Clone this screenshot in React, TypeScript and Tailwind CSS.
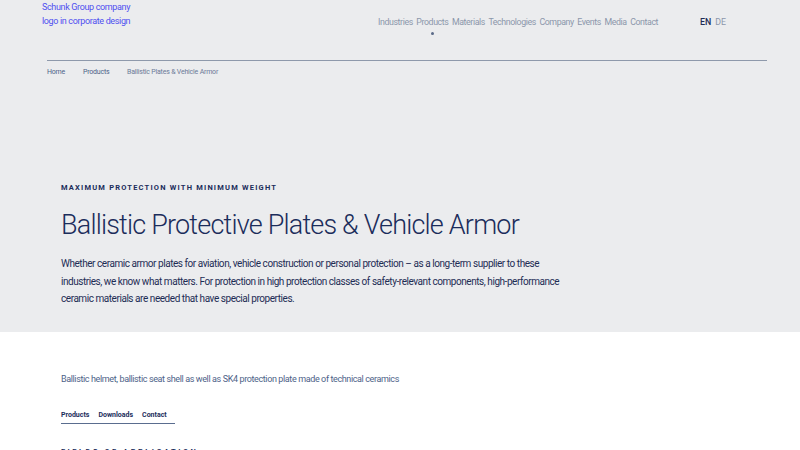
import React from "react";

export default function App() {
  const nav = ["Industries", "Products", "Materials", "Technologies", "Company", "Events", "Media", "Contact"];
  return (
    <div className="w-[800px] h-[450px] overflow-hidden bg-white font-['Roboto',sans-serif]">
      <section className="bg-[#ebecee] h-[332px] flex flex-col">
        <header className="flex items-start h-[60px]">
          <div className="ml-[42px] w-[336px] shrink-0 text-[9px] leading-[14px] text-[#4f4ff0] tracking-[-0.35px]">
            <div>Schunk Group company</div>
            <div>logo in corporate design</div>
          </div>
          <nav className="flex shrink-0 gap-[3.5px] pt-[15px] text-[8.8px] leading-[14px] text-[#8c97ab] tracking-[-0.4px]">
            {nav.map((n) => (
              <div key={n} className="flex flex-col items-center">
                <span>{n}</span>
                {n === "Products" && <span className="mt-[3px] w-[3px] h-[3px] rounded-full bg-[#5a6a88]" />}
              </div>
            ))}
          </nav>
          <div className="ml-auto mr-[74px] pt-[15px] flex gap-[4px] text-[8.8px] leading-[14px]">
            <span className="text-[#1e2d55] font-medium">EN</span>
            <span className="text-[#8c97ab]">DE</span>
          </div>
        </header>
        <div className="ml-[47px] mr-[33px] border-t border-[#8e99ab]" />
        <div className="ml-[47px] mt-[6px] flex text-[7px] leading-[10px] text-[#4d6288] tracking-[-0.2px]">
          <span className="w-[36px]">Home</span>
          <span className="w-[44px]">Products</span>
          <span className="text-[#6c7b98]">Ballistic Plates &amp; Vehicle Armor</span>
        </div>
        <div className="ml-[61px] mt-[106px]">
          <div className="text-[7.5px] leading-[10px] font-bold tracking-[1.2px] text-[#1b2d5b]">
            MAXIMUM PROTECTION WITH MINIMUM WEIGHT
          </div>
          <h1 className="mt-[14px] text-[27px] leading-[36px] font-light tracking-[-0.8px] text-[#1b2d5b]">
            Ballistic Protective Plates &amp; Vehicle Armor
          </h1>
          <p className="mt-[12px] text-[10px] leading-[17.5px] text-[#1e2d55] tracking-[-0.45px]">
            Whether ceramic armor plates for aviation, vehicle construction or personal protection – as a long-term supplier to these
            <br />
            industries, we know what matters. For protection in high protection classes of safety-relevant components, high-performance
            <br />
            ceramic materials are needed that have special properties.
          </p>
        </div>
      </section>
      <section className="pl-[61px]">
        <div className="mt-[41px] text-[9px] leading-[12px] text-[#4d6288] tracking-[-0.38px]">
          Ballistic helmet, ballistic seat shell as well as SK4 protection plate made of technical ceramics
        </div>
        <div className="mt-[25px] inline-flex gap-[9px] text-[7px] leading-[10px] font-bold text-[#1b2d5b] border-b border-[#5a6d8f] pb-[3px] pr-[8px]">
          <span>Products</span>
          <span>Downloads</span>
          <span>Contact</span>
        </div>
        <div className="mt-[23px] text-[7.5px] leading-[10px] font-bold tracking-[2.5px] text-[#1b2d5b]">
          FIELDS OF APPLICATION
        </div>
      </section>
    </div>
  );
}
